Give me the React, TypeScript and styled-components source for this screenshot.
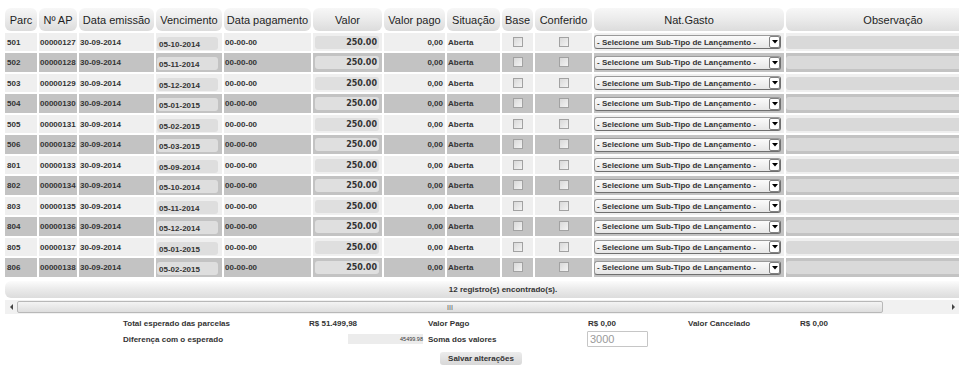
import React from "react";
import styled, { createGlobalStyle } from "styled-components";

const GlobalStyle = createGlobalStyle`
  html, body { margin: 0; padding: 0; background: #ffffff; }
  body {
    font-family: "Liberation Sans", Arial, sans-serif;
    color: #333;
    width: 964px;
    height: 372px;
    overflow: hidden;
  }
`;

const COLS = "32px 38px 75px 66px 87px 69px 61px 53px 31px 57px 190px 214px";

const Page = styled.div`
  padding-top: 8px;
  width: 964px;
`;

const Clip = styled.div`
  margin-left: 5px;
  width: 954px;
  overflow: hidden;
`;

const Table = styled.div`
  width: 996px;
  display: flex;
  flex-direction: column;
  gap: 2px;
`;

const HeadRow = styled.div`
  display: grid;
  grid-template-columns: ${COLS};
  column-gap: 2px;
  height: 23px;
`;

const HeadCell = styled.div`
  display: flex;
  align-items: center;
  justify-content: center;
  background: linear-gradient(#f7f7f7, #ececec 45%, #dcdcdc);
  border-radius: 6px;
  font-size: 11px;
  color: #1e1e1e;
  white-space: nowrap;
`;

const DataRow = styled.div<{ $alt: boolean }>`
  display: grid;
  grid-template-columns: ${COLS};
  column-gap: 2px;
  height: ${(p) => (p.$alt ? 19 : 18)}px;
`;

const Cell = styled.div<{ $alt: boolean; $align?: string; $pad?: string }>`
  background: ${(p) => (p.$alt ? "#c3c3c3" : "#efefef")};
  display: flex;
  align-items: center;
  justify-content: ${(p) => p.$align ?? "flex-start"};
  padding: ${(p) => p.$pad ?? "0 2px"};
  font-size: 8px;
  font-weight: bold;
  color: #333;
  white-space: nowrap;
  overflow: hidden;
`;

const DateBox = styled.div`
  width: 61px;
  height: 13px;
  margin-top: 2px;
  background: #dedede;
  border-radius: 3px;
  display: flex;
  align-items: center;
  padding: 2px 0 0 2px;
  box-sizing: border-box;
  font-size: 8px;
  font-weight: bold;
  color: #333;
`;

const ValueBox = styled.div`
  width: 64px;
  height: 13px;
  background: #dfdfdf;
  border-radius: 3px;
  display: flex;
  align-items: center;
  justify-content: flex-end;
  padding-right: 2px;
  box-sizing: border-box;
  font-family: "DejaVu Sans", Verdana, sans-serif;
  font-size: 8px;
  font-weight: bold;
  color: #333;
`;

const Check = styled.span`
  display: block;
  width: 10px;
  height: 10px;
  box-sizing: border-box;
  border: 1px solid #a2a2a2;
  background: linear-gradient(135deg, #d9d9d9, #f3f3f3);
  margin-top: -1px;
`;

const SelectBox = styled.div`
  width: 187px;
  height: 14px;
  box-sizing: border-box;
  border: 1px solid #9a9a9a;
  border-right-color: #6f6f6f;
  border-bottom-color: #6f6f6f;
  border-radius: 3px;
  background: linear-gradient(#fbfbfb, #e6e6e6);
  display: flex;
  align-items: center;
  justify-content: space-between;
  padding-left: 2px;
  font-size: 8px;
  font-weight: bold;
  color: #333;
`;

const SelectArrow = styled.span`
  width: 11px;
  height: 12px;
  box-sizing: border-box;
  border: 1px solid #808080;
  border-radius: 2px;
  background: #fff;
  display: flex;
  align-items: center;
  justify-content: center;
`;

const ObsBox = styled.div`
  width: 100%;
  height: 13px;
  background: #d9d9d9;
  border-radius: 3px;
`;

const FooterBar = styled.div`
  margin-top: 2px;
  height: 17px;
  border-radius: 6px;
  background: linear-gradient(#fcfcfc, #eaeaea 50%, #dcdcdc);
  display: flex;
  align-items: center;
  justify-content: center;
  font-size: 8px;
  font-weight: bold;
  color: #333;
`;

const ScrollBar = styled.div`
  margin: 2px 0 0 5px;
  width: 954px;
  height: 14px;
  background: #f1f1f1;
  display: flex;
  align-items: center;
`;

const ScrollBtn = styled.span`
  width: 12px;
  height: 14px;
  display: flex;
  align-items: center;
  justify-content: center;
`;

const Track = styled.div`
  flex: 1;
  height: 14px;
  display: flex;
  align-items: center;
`;

const Thumb = styled.div`
  height: 12px;
  box-sizing: border-box;
  border: 1px solid #b8b8b8;
  border-radius: 2px;
  background: linear-gradient(#f4f4f4, #dedede);
  display: flex;
  align-items: center;
  justify-content: center;
  font-size: 7px;
  color: #555;
`;

const Summary = styled.div`
  margin: 2px 0 0 123px;
  display: grid;
  grid-template-columns: 186px 119px 160px 100px 112px auto;
  grid-template-rows: 15px 16px;
  align-items: center;
  font-size: 8px;
  font-weight: bold;
  color: #333;
`;

const Diff = styled.div`
  justify-self: end;
  margin-right: 5px;
  width: 75px;
  height: 10px;
  background: #ececec;
  display: flex;
  align-items: center;
  justify-content: flex-end;
  font-size: 5.5px;
  font-weight: normal;
  color: #333;
`;

const SumInput = styled.div`
  margin-left: -1px;
  width: 61px;
  height: 16px;
  box-sizing: border-box;
  border: 1px solid #c6c6c6;
  border-radius: 1px;
  display: flex;
  align-items: center;
  padding-left: 2px;
  font-size: 11px;
  font-weight: normal;
  color: #9a9a9a;
  background: #fff;
`;

const Actions = styled.div`
  margin-top: 5px;
  display: flex;
  justify-content: center;
  padding-right: 2px;
`;

const SaveButton = styled.button`
  width: 82px;
  height: 13px;
  border: none;
  border-radius: 3px;
  background: linear-gradient(#ececec, #d8d8d8);
  font-family: "Liberation Sans", Arial, sans-serif;
  font-size: 8px;
  font-weight: bold;
  color: #333;
  padding: 0;
`;

const headers = [
  "Parc",
  "Nº AP",
  "Data emissão",
  "Vencimento",
  "Data pagamento",
  "Valor",
  "Valor pago",
  "Situação",
  "Base",
  "Conferido",
  "Nat.Gasto",
  "Observação",
];

const rows: [string, string, string, string][] = [
  ["501", "00000127", "30-09-2014", "05-10-2014"],
  ["502", "00000128", "30-09-2014", "05-11-2014"],
  ["503", "00000129", "30-09-2014", "05-12-2014"],
  ["504", "00000130", "30-09-2014", "05-01-2015"],
  ["505", "00000131", "30-09-2014", "05-02-2015"],
  ["506", "00000132", "30-09-2014", "05-03-2015"],
  ["801", "00000133", "30-09-2014", "05-09-2014"],
  ["802", "00000134", "30-09-2014", "05-10-2014"],
  ["803", "00000135", "30-09-2014", "05-11-2014"],
  ["804", "00000136", "30-09-2014", "05-12-2014"],
  ["805", "00000137", "30-09-2014", "05-01-2015"],
  ["806", "00000138", "30-09-2014", "05-02-2015"],
];

const Tri = ({ dir }: { dir: "down" | "left" | "right" }) => {
  const pts =
    dir === "down" ? "0,0 6,0 3,3.5" : dir === "left" ? "3,0 3,6 0,3" : "0,0 0,6 3,3";
  const w = dir === "down" ? 6 : 3;
  const h = dir === "down" ? 4 : 6;
  return (
    <svg width={w} height={h} viewBox={`0 0 ${w} ${h}`}>
      <polygon points={pts} fill={dir === "down" ? "#000" : "#444"} />
    </svg>
  );
};

export default function App() {
  return (
    <Page>
      <GlobalStyle />
      <Clip>
        <Table>
          <HeadRow>
            {headers.map((h) => (
              <HeadCell key={h}>{h}</HeadCell>
            ))}
          </HeadRow>
          {rows.map(([parc, ap, em, venc], i) => {
            const alt = i % 2 === 1;
            return (
              <DataRow key={parc} $alt={alt}>
                <Cell $alt={alt}>{parc}</Cell>
                <Cell $alt={alt} $pad="0 0 0 1px">{ap}</Cell>
                <Cell $alt={alt} $pad="0 0 0 1px">{em}</Cell>
                <Cell $alt={alt} $pad="0 0 0 1px">
                  <DateBox>{venc}</DateBox>
                </Cell>
                <Cell $alt={alt} $pad="0 0 0 1px">00-00-00</Cell>
                <Cell $alt={alt} $pad="0 0 0 2px">
                  <ValueBox>250.00</ValueBox>
                </Cell>
                <Cell $alt={alt} $align="flex-end" $pad="0 2px 0 0">0,00</Cell>
                <Cell $alt={alt} $pad="0 0 0 1px">Aberta</Cell>
                <Cell $alt={alt} $align="center" $pad="0">
                  <Check />
                </Cell>
                <Cell $alt={alt} $align="center" $pad="0">
                  <Check />
                </Cell>
                <Cell $alt={alt} $pad="0">
                  <SelectBox>
                    <span>- Selecione um Sub-Tipo de Lançamento -</span>
                    <SelectArrow>
                      <Tri dir="down" />
                    </SelectArrow>
                  </SelectBox>
                </Cell>
                <Cell $alt={alt} $pad="0">
                  <ObsBox />
                </Cell>
              </DataRow>
            );
          })}
          <FooterBar>12 registro(s) encontrado(s).</FooterBar>
        </Table>
      </Clip>
      <ScrollBar>
        <ScrollBtn>
          <Tri dir="left" />
        </ScrollBtn>
        <Track>
          <Thumb style={{ width: 866 }}>III</Thumb>
        </Track>
        <ScrollBtn>
          <Tri dir="right" />
        </ScrollBtn>
      </ScrollBar>
      <Summary>
        <span>Total esperado das parcelas</span>
        <span>R$ 51.499,98</span>
        <span>Valor Pago</span>
        <span>R$ 0,00</span>
        <span>Valor Cancelado</span>
        <span>R$ 0,00</span>
        <span>Diferença com o esperado</span>
        <Diff>45499.98</Diff>
        <span>Soma dos valores</span>
        <SumInput>3000</SumInput>
        <span />
        <span />
      </Summary>
      <Actions>
        <SaveButton>Salvar alterações</SaveButton>
      </Actions>
    </Page>
  );
}
